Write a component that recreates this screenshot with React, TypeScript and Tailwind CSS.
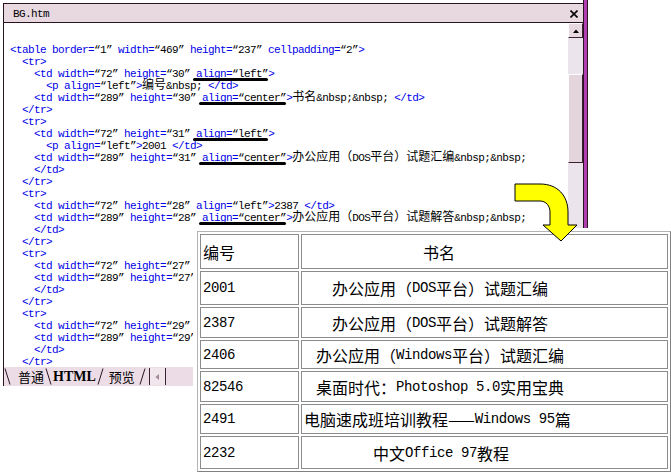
import React from 'react';

const CJK = /([\u2014\u3000-\u9fff\uff00-\uffef]+)/;

const codeLatin = "font-['Liberation_Mono',monospace] text-[11px] tracking-[-0.6px]";
const codeCjk = "font-['Noto_Sans_CJK_SC',sans-serif] text-[12px]";
const cellLatin = "font-['Liberation_Mono',monospace] text-[14px] tracking-[-0.4px]";
const cellCjk = "font-['Noto_Sans_CJK_SC',sans-serif] text-[16px]";

function Mixed({ text, latin, cjk }: { text: string; latin: string; cjk: string }) {
  return (
    <>
      {text.split(CJK).map((part, i) =>
        part === '' ? null : (
          <span key={i} className={i % 2 ? cjk : latin}>
            {part}
          </span>
        ),
      )}
    </>
  );
}

type Run = { text: string; blue: boolean; u: boolean };

// tags blue, quoted values and plain text black; [[ ]] marks the hand drawn underline
function tokenize(src: string): Run[] {
  const runs: Run[] = [];
  let inTag = false;
  let inStr = false;
  let u = false;
  const push = (ch: string, blue: boolean) => {
    const last = runs[runs.length - 1];
    if (last && last.blue === blue && last.u === u) last.text += ch;
    else runs.push({ text: ch, blue, u });
  };
  let i = 0;
  while (i < src.length) {
    if (src.startsWith('[[', i)) {
      u = true;
      i += 2;
      continue;
    }
    if (src.startsWith(']]', i)) {
      u = false;
      i += 2;
      continue;
    }
    const ch = src[i];
    if (!inTag) {
      if (ch === '<') {
        inTag = true;
        push(ch, true);
      } else push(ch, false);
    } else if (inStr) {
      push(ch, false);
      if (ch === '”') inStr = false;
    } else if (ch === '“') {
      inStr = true;
      push(ch, false);
    } else {
      push(ch, true);
      if (ch === '>') inTag = false;
    }
    i++;
  }
  return runs;
}

function CodeLine({ src }: { src: string }) {
  const groups: { u: boolean; runs: Run[] }[] = [];
  for (const r of tokenize(src)) {
    const g = groups[groups.length - 1];
    if (g && g.u === r.u) g.runs.push(r);
    else groups.push({ u: r.u, runs: [r] });
  }
  return (
    <div className="h-[12px] leading-[12px] whitespace-pre">
      {groups.map((g, gi) => {
        const inner = g.runs.map((r, ri) => (
          <span key={ri} className={r.blue ? 'text-[#0000e8]' : 'text-black'}>
            <Mixed text={r.text} latin={codeLatin} cjk={codeCjk} />
          </span>
        ));
        return g.u ? (
          <span key={gi} className="relative inline-block h-[12px] align-top">
            {inner}
            <span className="absolute left-[-3px] right-0 top-[13px] h-[3px] rounded-full bg-black" />
          </span>
        ) : (
          <span key={gi}>{inner}</span>
        );
      })}
    </div>
  );
}

const lines = [
  '<table border=“1” width=“469” height=“237” cellpadding=“2”>',
  '  <tr>',
  '    <td width=“72” height=“30” [[align=“left”]]>',
  '      <p align=“left”>编号&nbsp; </td>',
  '    <td width=“289” height=“30” [[align=“center”]]>书名&nbsp;&nbsp; </td>',
  '  </tr>',
  '  <tr>',
  '    <td width=“72” height=“31” [[align=“left”]]>',
  '      <p align=“left”>2001 </td>',
  '    <td width=“289” height=“31” [[align=“center”]]>办公应用（DOS平台）试题汇编&nbsp;&nbsp;',
  '    </td>',
  '  </tr>',
  '  <tr>',
  '    <td width=“72” height=“28” align=“left”>2387 </td>',
  '    <td width=“289” height=“28” [[align=“center”]]>办公应用（DOS平台）试题解答&nbsp;&nbsp;',
  '    </td>',
  '  </tr>',
  '  <tr>',
  '    <td width=“72” height=“27” align=“left”>2406 </td>',
  '    <td width=“289” height=“27” align=“center”>办公应用（Windows平台）试题汇编&nbsp;&nbsp;',
  '    </td>',
  '  </tr>',
  '  <tr>',
  '    <td width=“72” height=“29” align=“left”>82546 </td>',
  '    <td width=“289” height=“29” align=“center”>桌面时代：Photoshop 5.0实用宝典',
  '    </td>',
  '  </tr>',
];

const rows = [
  { id: '编号', name: '书名', h: 'h-[35px]', pad: 'pl-[121px]' },
  { id: '2001', name: '办公应用（DOS平台）试题汇编', h: 'h-[34px]', pad: 'pl-[30px]' },
  { id: '2387', name: '办公应用（DOS平台）试题解答', h: 'h-[31px]', pad: 'pl-[30px]' },
  { id: '2406', name: '办公应用（Windows平台）试题汇编', h: 'h-[29px]', pad: 'pl-[14px]' },
  { id: '82546', name: '桌面时代：Photoshop 5.0实用宝典', h: 'h-[31px]', pad: 'pl-[14px]' },
  { id: '2491', name: '电脑速成班培训教程——Windows 95篇', h: 'h-[30px]', pad: 'pl-[2px]' },
  { id: '2232', name: '中文Office 97教程', h: 'h-[33px]', pad: 'pl-[71px]' },
];

function Slash({ back, className = '' }: { back?: boolean; className?: string }) {
  return (
    <svg width="7" height="17" viewBox="0 0 7 17" className={`shrink-0 ${className}`}>
      {back ? (
        <line x1="1" y1="0.5" x2="6" y2="16.5" stroke="#2a1420" strokeWidth="1" />
      ) : (
        <line x1="6" y1="0.5" x2="1" y2="16.5" stroke="#2a1420" strokeWidth="1" />
      )}
    </svg>
  );
}

function Scrollbar() {
  return (
    <div className="w-[15px] shrink-0 flex flex-col bg-[#ece4ec]">
      <div className="h-[15px] flex items-center justify-center bg-[#e8d8e0] border border-t-white border-l-white border-r-[#3a2030] border-b-[#3a2030]">
        <svg width="6" height="4" viewBox="0 0 6 4">
          <polygon points="0,4 6,4 3,0.5" fill="#000" />
        </svg>
      </div>
      <div className="h-[36px]" />
      <div className="h-[89px] bg-[#e4d4dc] border border-t-white border-l-white border-r-[#3a2030] border-b-[#3a2030]" />
    </div>
  );
}

function TabBar() {
  return (
    <div className="h-[19px] shrink-0 flex items-center bg-[#ecdce6] whitespace-nowrap">
      <Slash back />
      <span className="ml-[7px] mr-[1px] font-['Noto_Sans_CJK_SC',sans-serif] text-[13px] leading-[16px] text-black">普通</span>
      <Slash back />
      <span className="ml-[1px] font-['Liberation_Serif',serif] font-bold text-[14px] leading-[16px] text-black">HTML</span>
      <Slash className="ml-[1px]" />
      <span className="ml-[5px] mr-[4px] font-['Noto_Sans_CJK_SC',sans-serif] text-[13px] leading-[16px] text-black">预览</span>
      <Slash />
      <div className="ml-[3px] h-[17px] w-[17px] shrink-0 flex items-center justify-center border-l border-r border-[#3a2030] bg-[#f0e6ec]">
        <svg width="4" height="6" viewBox="0 0 4 6">
          <polygon points="4,0 4,6 0.5,3" fill="#a08898" />
        </svg>
      </div>
    </div>
  );
}

function TablePicture() {
  return (
    <div className="absolute left-[193px] top-[228px] w-[478px] h-[245px] bg-white pl-[4px] pt-[3px]">
      <div className="w-[474px] flex flex-col gap-[2px] p-[2px] border border-t-[#b4b4b4] border-l-[#b4b4b4] border-r-[#808080] border-b-[#808080]">
        {rows.map((r) => (
          <div key={r.id} className={`flex gap-[2px] ${r.h}`}>
            <div className="w-[99px] flex items-center pl-[2px] border border-[#8c8c8c] whitespace-pre text-black leading-[18px]">
              <Mixed text={r.id} latin={cellLatin} cjk={cellCjk} />
            </div>
            <div className={`w-[367px] flex items-center border border-[#8c8c8c] whitespace-pre text-black leading-[18px] ${r.pad}`}>
              <Mixed text={r.name} latin={cellLatin} cjk={cellCjk} />
            </div>
          </div>
        ))}
      </div>
    </div>
  );
}

function Arrow() {
  return (
    <svg className="absolute left-[510px] top-[180px]" width="72" height="66" viewBox="0 0 72 66">
      <path
        d="M5,4 L30,4 C48,4 58,16 58,32 L58,45 L67,45 L51,61 L33,45 L40,45 L40,32 C40,26 36,21 30,21 L5,21 Z"
        fill="#ffff00"
        stroke="#000"
        strokeWidth="1"
      />
    </svg>
  );
}

export default function App() {
  return (
    <div className="relative w-[671px] h-[473px] overflow-hidden bg-white">
      <div className="flex w-[588px] h-[386px]">
        <div className="flex-1 min-w-0 flex flex-col pl-[3px] pt-[3px]">
          <div className="flex-1 min-h-0 flex flex-col border-l border-t border-[#2a1420]">
            <div className="h-[19px] shrink-0 flex items-center justify-between pt-[2px] pl-[9px] pr-[5px] bg-[#e8d8e0] border-b border-[#2a1420]">
              <span className={`${codeLatin} text-black leading-[12px]`}>BG.htm</span>
              <svg width="8" height="8" viewBox="0 0 8 8">
                <path d="M0.5,0.5 L7.5,7.5 M7.5,0.5 L0.5,7.5" stroke="#000" strokeWidth="1.6" />
              </svg>
            </div>
            <div className="flex-1 min-h-0 flex">
              <div className="flex-1 min-w-0 overflow-hidden bg-white pt-[18px] pl-[6px]">
                {lines.map((l, i) => (
                  <CodeLine key={i} src={l} />
                ))}
              </div>
              <Scrollbar />
            </div>
            <TabBar />
          </div>
        </div>
        <div className="w-[5px] shrink-0 bg-[#b040b0] border-l border-r border-[#2a1420]" />
      </div>
      <TablePicture />
      <Arrow />
    </div>
  );
}
